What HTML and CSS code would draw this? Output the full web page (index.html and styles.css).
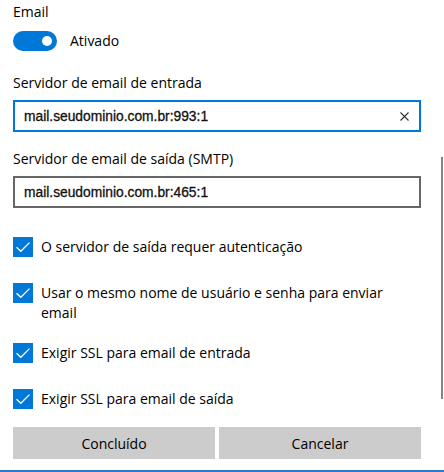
FILE: index.html
```html
<!DOCTYPE html>
<html lang="pt-BR">
<head>
<meta charset="utf-8">
<link rel="stylesheet" href="styles.css">
</head>
<body>
<div class="page">
  <div class="text label-top">Email</div>
  <div class="toggle-row">
    <span class="toggle"><span class="knob"></span></span>
    <span class="text">Ativado</span>
  </div>

  <div class="text field-label first">Servidor de email de entrada</div>
  <div class="input focused">
    <span class="value">mail.seudominio.com.br:993:1</span>
    <svg class="clear" width="9" height="9" viewBox="0 0 9 9"><path d="M0.5 0.5 L8.5 8.5 M8.5 0.5 L0.5 8.5" stroke="#333" stroke-width="1.1" fill="none"/></svg>
  </div>

  <div class="text field-label">Servidor de email de saída (SMTP)</div>
  <div class="input">
    <span class="value">mail.seudominio.com.br:465:1</span>
  </div>

  <div class="checks">
    <div class="check">
      <span class="box"><svg width="20" height="20" viewBox="0 0 20 20"><path d="M3.5 10.2 L7.8 14.3 L16.5 5.6" stroke="#fff" stroke-width="1.3" fill="none"/></svg></span>
      <span class="text">O servidor de saída requer autenticação</span>
    </div>
    <div class="check">
      <span class="box"><svg width="20" height="20" viewBox="0 0 20 20"><path d="M3.5 10.2 L7.8 14.3 L16.5 5.6" stroke="#fff" stroke-width="1.3" fill="none"/></svg></span>
      <span class="text">Usar o mesmo nome de usuário e senha para enviar email</span>
    </div>
    <div class="check">
      <span class="box"><svg width="20" height="20" viewBox="0 0 20 20"><path d="M3.5 10.2 L7.8 14.3 L16.5 5.6" stroke="#fff" stroke-width="1.3" fill="none"/></svg></span>
      <span class="text">Exigir SSL para email de entrada</span>
    </div>
    <div class="check">
      <span class="box"><svg width="20" height="20" viewBox="0 0 20 20"><path d="M3.5 10.2 L7.8 14.3 L16.5 5.6" stroke="#fff" stroke-width="1.3" fill="none"/></svg></span>
      <span class="text">Exigir SSL para email de saída</span>
    </div>
  </div>

  <div class="buttons">
    <div class="btn">Concluído</div>
    <div class="btn">Cancelar</div>
  </div>

  <div class="scrollbar"></div>
</div>
</body>
</html>
```
FILE: styles.css
```css
html, body {
  margin: 0;
  padding: 0;
  background: #fff;
}
.page {
  position: relative;
  width: 444px;
  height: 472px;
  box-sizing: border-box;
  padding: 2px 23px 0 13px;
  border-bottom: 2px solid #2b79d0;
  overflow: hidden;
  font-family: "Segoe UI", "Open Sans", "Noto Sans", sans-serif;
  font-size: 14px;
  color: #000;
}
.text {
  line-height: 20px;
  font-size: 14px;
}
.toggle-row {
  display: flex;
  align-items: center;
  gap: 13px;
  margin-top: 9px;
  height: 20px;
}
.toggle {
  position: relative;
  width: 44px;
  height: 20px;
  border-radius: 10px;
  background: #0078d7;
  flex: none;
}
.knob {
  position: absolute;
  right: 5px;
  top: 5px;
  width: 10px;
  height: 10px;
  border-radius: 50%;
  background: #fff;
}
.field-label {
  margin-top: 17px;
  margin-bottom: 7px;
}
.field-label.first {
  margin-top: 22px;
}
.input {
  height: 32px;
  box-sizing: border-box;
  border: 2px solid #666;
  display: flex;
  align-items: center;
  padding: 0 10px 0 9px;
}
.input.focused {
  border-color: #0078d7;
}
.value {
  flex: 1;
  font-family: "Liberation Sans", Arial, sans-serif;
  font-size: 13.8px;
  color: #111;
  -webkit-text-stroke: 0.3px #111;
}
.clear {
  flex: none;
}
.checks {
  margin-top: 29px;
}
.check {
  display: flex;
  align-items: flex-start;
  gap: 8px;
  min-height: 32px;
  box-sizing: border-box;
  padding-bottom: 6px;
  margin-bottom: 14px;
}
.check:last-child {
  margin-bottom: 6px;
}
.box {
  width: 20px;
  height: 20px;
  background: #0078d7;
  flex: none;
  display: block;
}
.box svg {
  display: block;
}
.buttons {
  display: flex;
  gap: 4px;
}
.btn {
  flex: 1;
  height: 32px;
  background: #cccccc;
  display: flex;
  align-items: center;
  justify-content: center;
  font-size: 14px;
}
.scrollbar {
  position: absolute;
  left: 441px;
  top: 157px;
  width: 2px;
  height: 242px;
  background: #858585;
}
```
